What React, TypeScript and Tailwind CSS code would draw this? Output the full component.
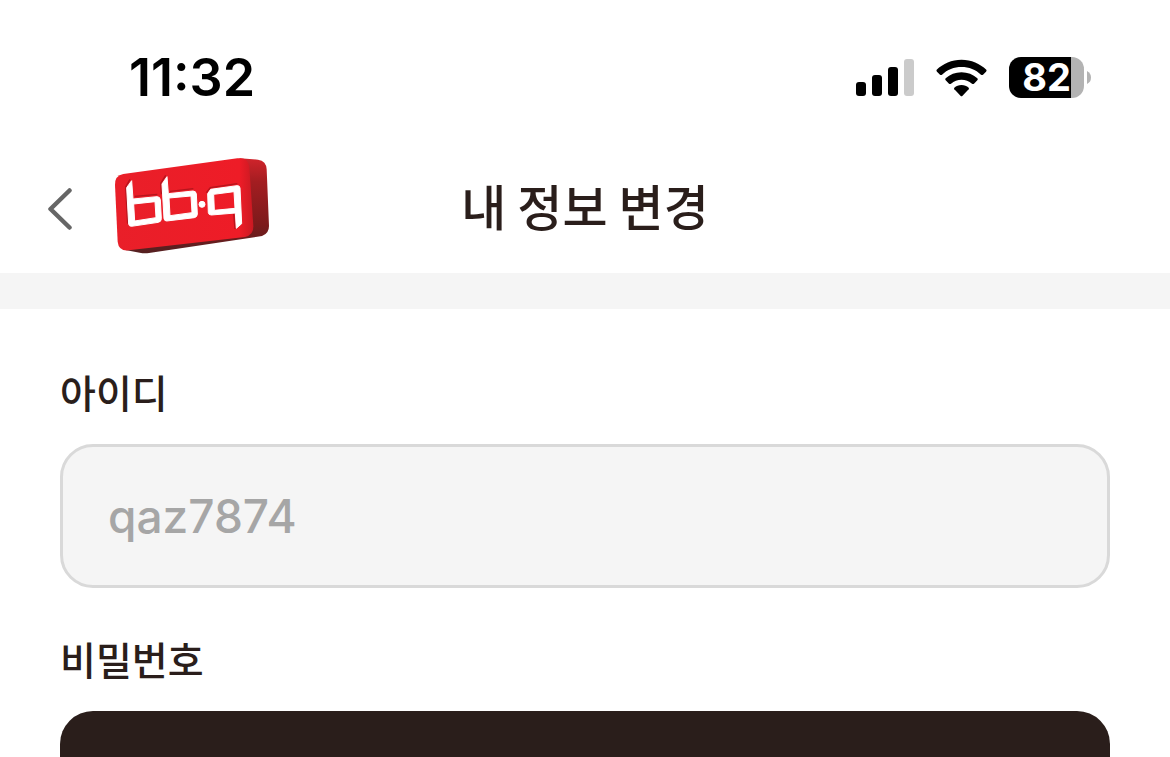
function SignalIcon() {
  return (
    <svg viewBox="0 0 58 38" className="h-[38px] w-[58px]" aria-hidden="true">
      <rect x="0" y="23" width="10" height="14" rx="3" />
      <rect x="16" y="16" width="10" height="21" rx="3" />
      <rect x="32" y="8" width="10" height="29" rx="3" />
      <rect x="48" y="0" width="10" height="37" rx="3" fill="#cbcbcb" />
    </svg>
  );
}

function WifiIcon() {
  return (
    <svg viewBox="288 56 153 112" className="h-[38px] w-[51px]" aria-hidden="true">
      <path d="M364.500 57 C394 57 420 69 439 87 Q441 90 438 93 L429 102 Q426 104 423 102 C407 87 387 79 364.500 79 C342 79 322 87 306 102 Q303 104 300 102 L291 93 Q288 90 290 87 C309 69 335 57 364.500 57Z" />
      <path d="M364.500 95 C383 95 399 102 412 113 Q415 116 412 119 L402 129 Q399 131 396 129 C387 121 376 117 364.500 117 C353 117 342 121 333 129 Q330 131 327 129 L317 119 Q314 116 317 113 C330 102 346 95 364.500 95Z" />
      <path d="M364.500 133 C373 133 380 136 386 141 Q388 143 386 146 L367 166 Q364.500 168 362 166 L343 146 Q341 143 343 141 C349 136 356 133 364.500 133Z" />
    </svg>
  );
}

function Battery() {
  return (
    <div className="flex items-center gap-[3px]">
      <div className="flex h-[41px] w-[75px] items-center justify-end rounded-[12px] bg-[linear-gradient(to_right,#000_62px,#b3b3b3_62px)] pr-[13px] text-[38px] leading-[41px] font-bold text-white">
        82
      </div>
      <svg viewBox="0 0 4 13" className="h-[13px] w-1" aria-hidden="true">
        <path d="M0 0 Q4 2 4 6.500 Q4 11 0 13Z" fill="#b3b3b3" />
      </svg>
    </div>
  );
}

function Logo() {
  return (
    <svg viewBox="42 36 468 291" className="h-[97px] w-[156px]" role="img" aria-label="bb.q">
      <defs>
        <linearGradient id="side" x1="0" y1="0" x2="0" y2="1">
          <stop offset="0" stopColor="#d0242b" />
          <stop offset="0.250" stopColor="#a31d21" />
          <stop offset="0.700" stopColor="#7c1a1b" />
          <stop offset="1" stopColor="#542021" />
        </linearGradient>
        <linearGradient id="edge" x1="0" y1="0" x2="1" y2="0">
          <stop offset="0" stopColor="#e91f29" />
          <stop offset="0.900" stopColor="#ee1c27" />
          <stop offset="1" stopColor="#c91922" />
        </linearGradient>
      </defs>
      <path
        d="M420 40 L474 44 Q499 48 500 73 L507 243 Q507 266 486 273 L147 324 Q133 326 119 323 L76 315 Z"
        fill="url(#side)"
      />
      <path
        d="M70 87 L412 40 Q445 36 448 66 L460 244 Q461 270 435 276 L86 316 Q56 319 53 290 L45 120 Q44 92 70 87Z"
        fill="url(#edge)"
      />
      <g fill="none" stroke="#b5151d" strokeWidth="4">
        <path d="M90 103 L77 126 L83 236 M104 154 L172 148 M197 91 L182 115 L184 148 M210 139 L280 131 M319 143 L331 128 L412 116 M401 206 L405 252" />
      </g>
      <g fill="#fff" fillRule="evenodd" stroke="#fff" strokeWidth="3" strokeLinejoin="round">
        <path d="M95 107 L99 162 L171 155 Q180 155 181 164 L184 221 Q184 230 175 232 L94 244 Q87 244 86 237 L80 128Z M101 177 L104 228 L168 218 L165 170Z" />
        <path d="M201 95 L205 146 L279 138 Q288 138 289 147 L292 207 Q292 216 283 218 L200 228 Q193 228 192 221 L186 117Z M207 159 L210 212 L276 203 L273 153Z" />
        <circle cx="306" cy="178" r="9" />
        <path d="M332 133 L411 122 Q419 121 420 129 L425 236 L409 250 L406 204 L334 210 Q326 210 325 203 L323 146Z M341 148 L343 196 L405 190 L402 140Z" />
      </g>
    </svg>
  );
}

export default function App() {
  return (
    <div className="flex h-screen flex-col overflow-hidden bg-white font-['Noto_Sans_CJK_KR',sans-serif] text-[#2a1e1b]">
      <div className="flex h-[145px] shrink-0 items-center justify-between pt-[10px] pr-[79px] pl-[129px] font-['Inter',sans-serif] text-black">
        <time className="text-[52px] leading-none font-semibold">11:32</time>
        <div className="flex items-center gap-[22px]">
          <SignalIcon />
          <WifiIcon />
          <Battery />
        </div>
      </div>

      <header className="grid h-32 shrink-0 grid-cols-[1fr_auto_1fr] items-center px-12 pb-2">
        <div className="flex items-center gap-[42px]">
          <button type="button" aria-label="뒤로" className="pt-2">
            <svg viewBox="0 0 24 42" className="h-[42px] w-6" aria-hidden="true">
              <path
                d="M21.500 2.500 L2.500 21 L21.500 39.500"
                fill="none"
                stroke="#666"
                strokeWidth="4.500"
                strokeLinecap="round"
                strokeLinejoin="round"
              />
            </svg>
          </button>
          <Logo />
        </div>
        <h1 className="text-[49px] leading-[56px] font-medium">내 정보 변경</h1>
      </header>

      <div className="h-9 shrink-0 bg-[#f5f5f5]" />

      <form className="flex flex-col px-[60px] pt-[54px]">
        <label htmlFor="user-id" className="text-[39px] leading-[56px] font-medium">
          아이디
        </label>
        <input
          id="user-id"
          type="text"
          value="qaz7874"
          disabled
          readOnly
          className="mt-[25px] h-36 w-full rounded-[33px] border-[3px] border-[#d9d9d9] bg-[#f5f5f5] px-[45px] font-['Inter',sans-serif] text-[46px] font-medium text-[#a6a6a6]"
        />
        <label htmlFor="change-password" className="mt-[42px] text-[39px] leading-[56px] font-medium">
          비밀번호
        </label>
        <button
          id="change-password"
          type="button"
          className="mt-[25px] h-36 w-full rounded-[33px] bg-[#2a1e1b]"
        />
      </form>
    </div>
  );
}
